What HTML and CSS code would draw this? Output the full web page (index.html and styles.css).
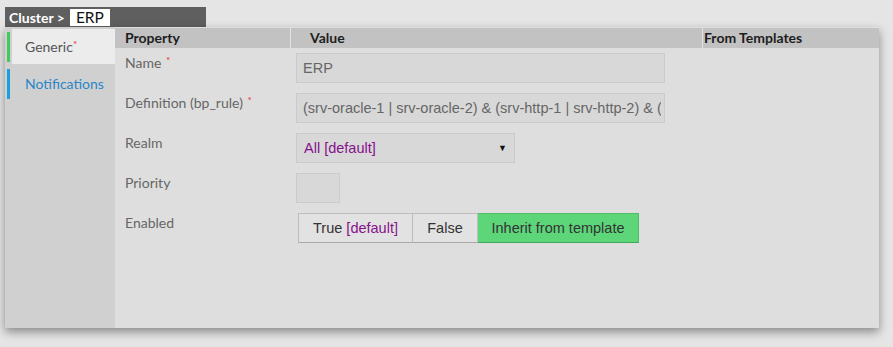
FILE: index.html
```html
<!DOCTYPE html>
<html lang="en">
<head>
  <meta charset="UTF-8" />
  <title>Cluster ERP</title>
  <link rel="stylesheet" href="styles.css">
</head>
<body>
  <div class="crumb">
    <span class="crumb-type">Cluster &gt;</span>
    <span class="crumb-name">ERP</span>
  </div>

  <div class="panel">
    <div class="sidebar">
      <div class="tab active">
        <span class="bar green"></span>
        <span class="tab-label">Generic<span class="req">*</span></span>
      </div>
      <div class="tab">
        <span class="bar blue"></span>
        <span class="tab-label link">Notifications</span>
      </div>
    </div>

    <div class="content">
      <div class="grid">
        <div class="head">Property</div>
        <div class="head value-head">Value</div>
        <div class="head tmpl-head">From Templates</div>

        <div class="prop">Name <span class="req">*</span></div>
        <div class="val"><input class="field wide" type="text" value="ERP" readonly /></div>
        <div class="tmpl"></div>

        <div class="prop">Definition (bp_rule) <span class="req">*</span></div>
        <div class="val"><input class="field wide" type="text" value="(srv-oracle-1 | srv-oracle-2) &amp; (srv-http-1 | srv-http-2) &amp; (srv-mail-1 | srv-mail-2)" readonly /></div>
        <div class="tmpl"></div>

        <div class="prop">Realm</div>
        <div class="val">
          <div class="field select"><span class="dflt">All [default]</span><span class="caret">&#9660;</span></div>
        </div>
        <div class="tmpl"></div>

        <div class="prop">Priority</div>
        <div class="val"><input class="field small" type="text" value="" readonly /></div>
        <div class="tmpl"></div>

        <div class="prop">Enabled</div>
        <div class="val">
          <div class="btn-group">
            <button class="btn first">True <span class="dflt">[default]</span></button>
            <button class="btn">False</button>
            <button class="btn on">Inherit from template</button>
          </div>
        </div>
        <div class="tmpl"></div>
      </div>
    </div>
  </div>
</body>
</html>
```

FILE: styles.css
```css
body {
  margin: 0;
  padding: 7px 14px 20px 5px;
  background-color: #e5e5e5;
  font-family: Lato, "Open Sans", sans-serif;
  font-size: 14px;
}
.crumb {
  width: 201px;
  height: 20px;
  background: #5f5f5f;
  display: flex;
  align-items: center;
  box-sizing: border-box;
  padding-left: 4px;
}
.crumb-type {
  color: #fff;
  font-weight: bold;
  font-size: 14px;
}
.crumb-name {
  background: #fff;
  color: #111;
  font-size: 15.5px;
  line-height: 17px;
  padding: 0 6px 0 6px;
  margin-left: 5px;
}
.panel {
  display: flex;
  height: 301px;
  box-shadow: 0 4px 9px rgba(0, 0, 0, 0.4);
}
.sidebar {
  width: 110px;
  background: #d0d0d0;
  padding-top: 2px;
}
.tab {
  display: flex;
  height: 35px;
  margin-bottom: 2px;
}
.bar {
  width: 3px;
  margin: 3px 2px 2px 2px;
}
.bar.green { background: #3fc95f; }
.bar.blue { background: #1a9fe0; }
.tab-label {
  flex: 1;
  padding-left: 13px;
  line-height: 35px;
  color: #555;
}
.tab.active .tab-label {
  background: #ececec;
}
.tab-label.link {
  color: #2b86c8;
}
.req {
  color: #e8322e;
  font-size: 10px;
  position: relative;
  top: -4px;
}
.content {
  flex: 1;
  background: #dedede;
  padding-top: 1px;
}
.grid {
  display: grid;
  grid-template-columns: 175px 412px 1fr;
  grid-template-rows: 20px repeat(5, 40px);
}
.head {
  background: #c2c2c2;
  font-weight: bold;
  color: #1e1e1e;
  line-height: 20px;
  padding-left: 10px;
}
.value-head {
  border-left: 1px solid #e2e2e2;
  padding-left: 19px;
}
.tmpl-head {
  border-left: 1px solid #e2e2e2;
  padding-left: 1px;
}
.prop {
  color: #666;
  padding: 6px 0 0 10px;
  font-size: 14px;
}
.prop .req {
  margin-left: 1px;
}
.val {
  padding: 5px 0 0 6px;
}
.field {
  box-sizing: border-box;
  height: 30px;
  background: #d8d8d8;
  border: 1px solid #cbcbcb;
  font-family: "Liberation Sans", Arial, sans-serif;
  font-size: 14.5px;
  color: #666;
  padding: 0 3px 0 6px;
  outline: none;
}
.field.wide {
  width: 369px;
}
.field.small {
  width: 44px;
}
.field.select {
  width: 219px;
  display: flex;
  align-items: center;
  justify-content: space-between;
  padding: 0 7px 0 7px;
}
.caret {
  font-size: 9px;
  color: #111;
}
.dflt {
  color: #86128c;
}
.btn-group {
  display: flex;
  margin-left: 2px;
}
.btn {
  box-sizing: border-box;
  height: 30px;
  background: #e2e2e2;
  border: 1px solid #bdbdbd;
  border-bottom-color: #a9a9a9;
  border-left: none;
  font-family: "Liberation Sans", Arial, sans-serif;
  font-size: 14.5px;
  color: #333;
  padding: 0;
  width: 65px;
}
.btn.first {
  border-left: 1px solid #bdbdbd;
  width: 115px;
}
.btn.on {
  background: #5dd67a;
  border-color: #4dbd66;
  border-bottom-color: #3ea956;
  width: 161px;
}
```
